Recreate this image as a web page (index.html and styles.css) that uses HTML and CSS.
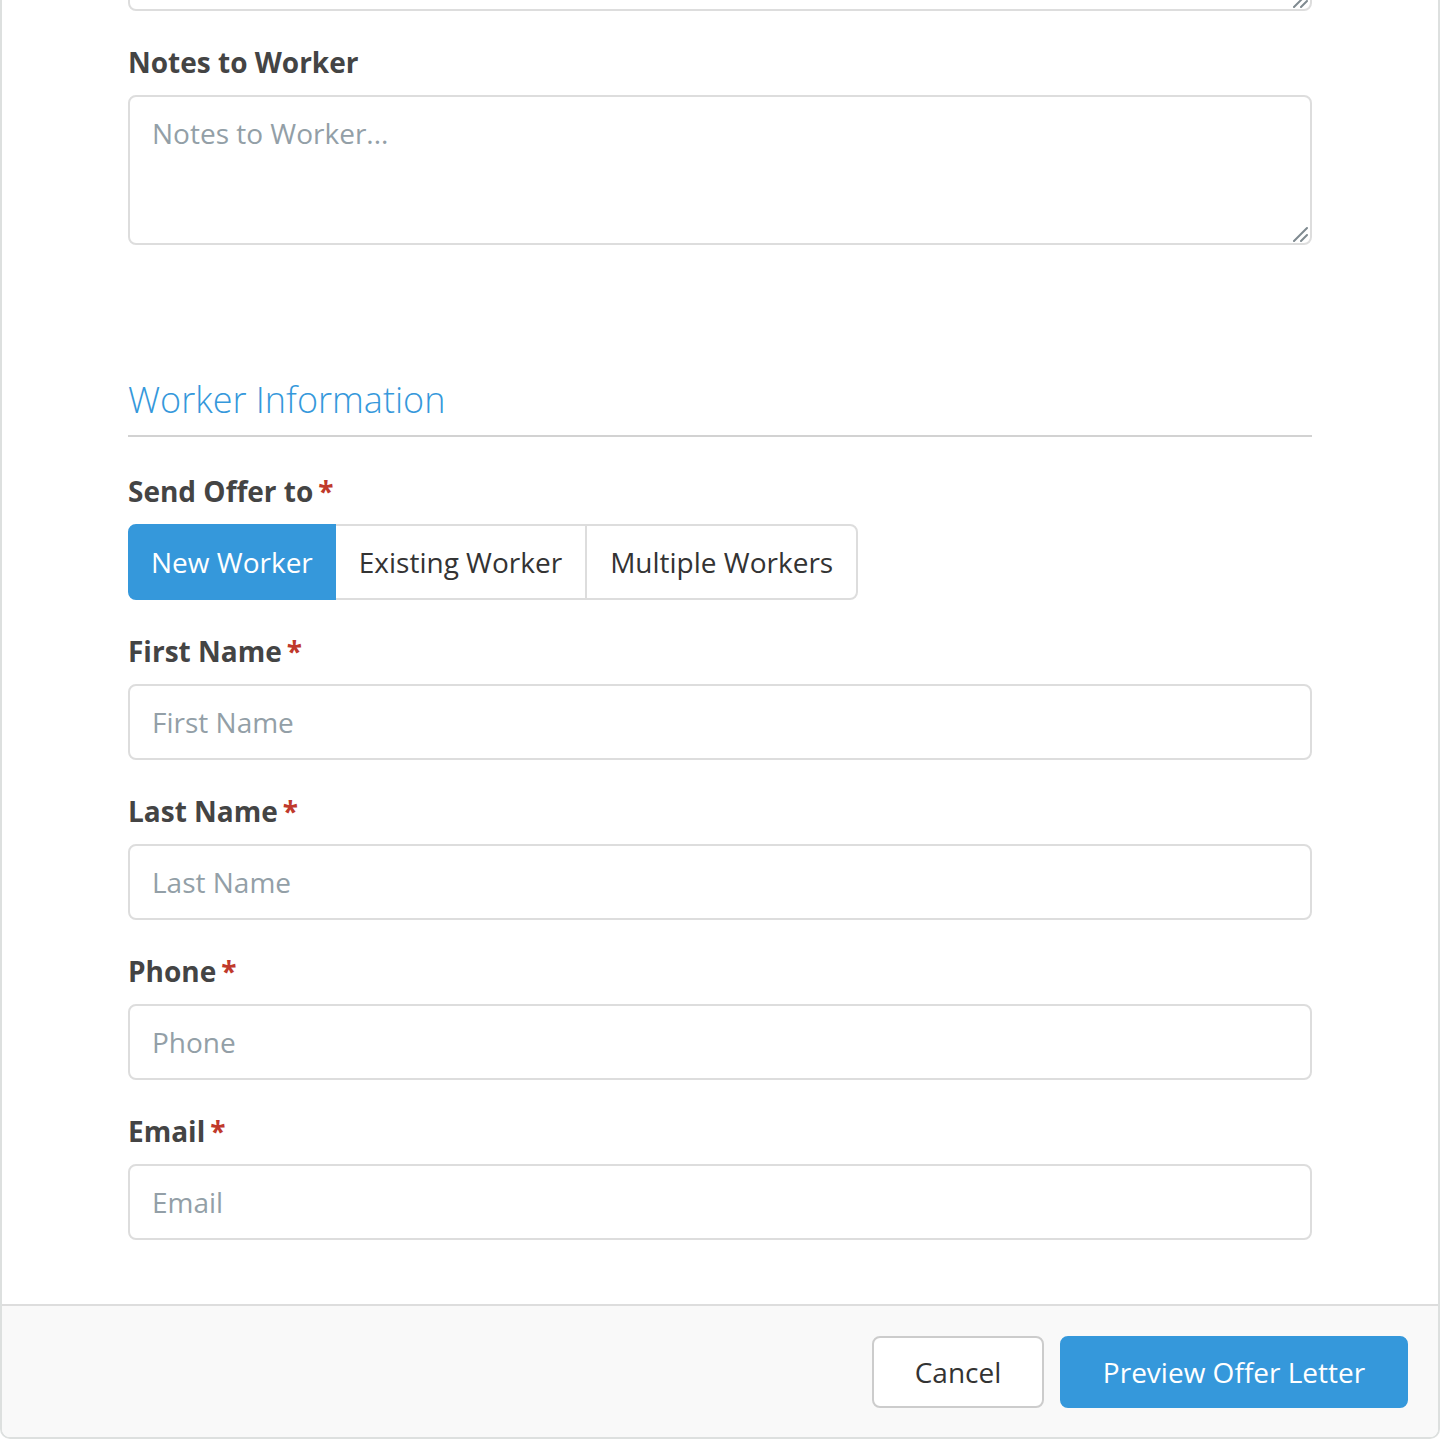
FILE: index.html
```html
<!DOCTYPE html>
<html lang="en">
<head>
<meta charset="utf-8">
<title>New Offer</title>
<link rel="stylesheet" href="styles.css">
</head>
<body>
<div class="panel">
  <div class="panel-body">
    <div class="form-group">
      <div class="textarea-wrap">
        <textarea class="form-control textarea-tall" aria-label="Description"></textarea>
        <svg class="grip" width="16" height="16" viewBox="0 0 16 16" aria-hidden="true"><path d="M2 15L15 2M9 15L15 9" stroke="#7f8a90" stroke-width="2" stroke-linecap="round" fill="none"/></svg>
      </div>
    </div>

    <div class="form-group">
      <label class="control-label" for="notes">Notes to Worker</label>
      <div class="textarea-wrap">
        <textarea id="notes" class="form-control textarea-tall" placeholder="Notes to Worker..."></textarea>
        <svg class="grip" width="16" height="16" viewBox="0 0 16 16" aria-hidden="true"><path d="M2 15L15 2M9 15L15 9" stroke="#7f8a90" stroke-width="2" stroke-linecap="round" fill="none"/></svg>
      </div>
    </div>

    <h3 class="section-title">Worker Information</h3>

    <div class="form-group">
      <label class="control-label">Send Offer to<span class="req">*</span></label>
      <div class="btn-group">
        <button type="button" class="seg active">New Worker</button>
        <button type="button" class="seg">Existing Worker</button>
        <button type="button" class="seg">Multiple Workers</button>
      </div>
    </div>

    <div class="form-group">
      <label class="control-label" for="first">First Name<span class="req">*</span></label>
      <input id="first" class="form-control" type="text" placeholder="First Name">
    </div>

    <div class="form-group">
      <label class="control-label" for="last">Last Name<span class="req">*</span></label>
      <input id="last" class="form-control" type="text" placeholder="Last Name">
    </div>

    <div class="form-group">
      <label class="control-label" for="phone">Phone<span class="req">*</span></label>
      <input id="phone" class="form-control" type="text" placeholder="Phone">
    </div>

    <div class="form-group">
      <label class="control-label" for="email">Email<span class="req">*</span></label>
      <input id="email" class="form-control" type="text" placeholder="Email">
    </div>
  </div>

  <div class="panel-footer">
    <button type="button" class="btn btn-default">Cancel</button>
    <button type="button" class="btn btn-primary">Preview Offer Letter</button>
  </div>
</div>
</body>
</html>
```

FILE: styles.css
```css
* {
  box-sizing: border-box;
}

html, body {
  margin: 0;
  padding: 0;
  background: #ffffff;
}

body {
  font-family: "Open Sans", "Liberation Sans", sans-serif;
  font-size: 28px;
  line-height: 40px;
  color: #333333;
  height: 1440px;
  overflow: hidden;
}

.panel {
  margin-top: -141px;
  border: 2px solid #dde0df;
  border-radius: 0 0 10px 10px;
  background: #ffffff;
  overflow: hidden;
}

.panel-body {
  padding: 0 126px 33px 126px;
}

.form-group {
  margin-bottom: 31px;
  display: flex;
  flex-direction: column;
  align-items: flex-start;
}

.control-label {
  display: block;
  font-weight: 700;
  color: #444444;
  line-height: 40px;
  margin-bottom: 13px;
}

.req {
  color: #c0392b;
  margin-left: 5px;
}

.form-control {
  display: block;
  width: 100%;
  height: 76px;
  padding: 16px 22px;
  font-family: inherit;
  font-size: 28px;
  line-height: 40px;
  color: #333333;
  background: #ffffff;
  border: 2px solid #dddddd;
  border-radius: 8px;
  outline: none;
  margin: 0;
}

.form-control::placeholder {
  color: #939fa7;
  opacity: 1;
}

.textarea-wrap {
  position: relative;
  width: 100%;
}

.textarea-tall {
  height: 150px;
  resize: none;
}

/* resize grip drawn over the textarea corner */
.grip {
  position: absolute;
  right: 4px;
  bottom: 3px;
  pointer-events: none;
}

.section-title {
  margin: 135px 0 34px 0;
  padding-bottom: 15px;
  font-size: 36px;
  line-height: 40px;
  font-weight: 300;
  color: #3598db;
  border-bottom: 2px solid #d2d2d2;
}

/* segmented choice for who receives the offer */
.btn-group {
  display: flex;
}

.seg {
  height: 76px;
  padding: 0 23px;
  font-family: inherit;
  font-size: 28px;
  line-height: 40px;
  color: #333333;
  background: #ffffff;
  border: 2px solid #dddddd;
  margin-left: -2px;
  cursor: pointer;
}

.seg:first-child {
  margin-left: 0;
  border-radius: 8px 0 0 8px;
}

.seg:last-child {
  border-radius: 0 8px 8px 0;
}

.seg.active {
  padding: 0 21px;
  background: #3598db;
  border-color: #3598db;
  color: #ffffff;
  position: relative;
  z-index: 1;
}

.panel-footer {
  display: flex;
  justify-content: flex-end;
  gap: 16px;
  padding: 30px 30px 29px 30px;
  background: #f9f9f9;
  border-top: 2px solid #dddddd;
}

.btn {
  height: 72px;
  padding: 0 40px;
  font-family: inherit;
  font-size: 28px;
  line-height: 40px;
  border-radius: 8px;
  cursor: pointer;
}

.btn-default {
  background: #ffffff;
  color: #333333;
  border: 2px solid #cccccc;
  width: 172px;
}

.btn-primary {
  background: #3598db;
  color: #ffffff;
  border: 2px solid #3598db;
  width: 348px;
}
```
